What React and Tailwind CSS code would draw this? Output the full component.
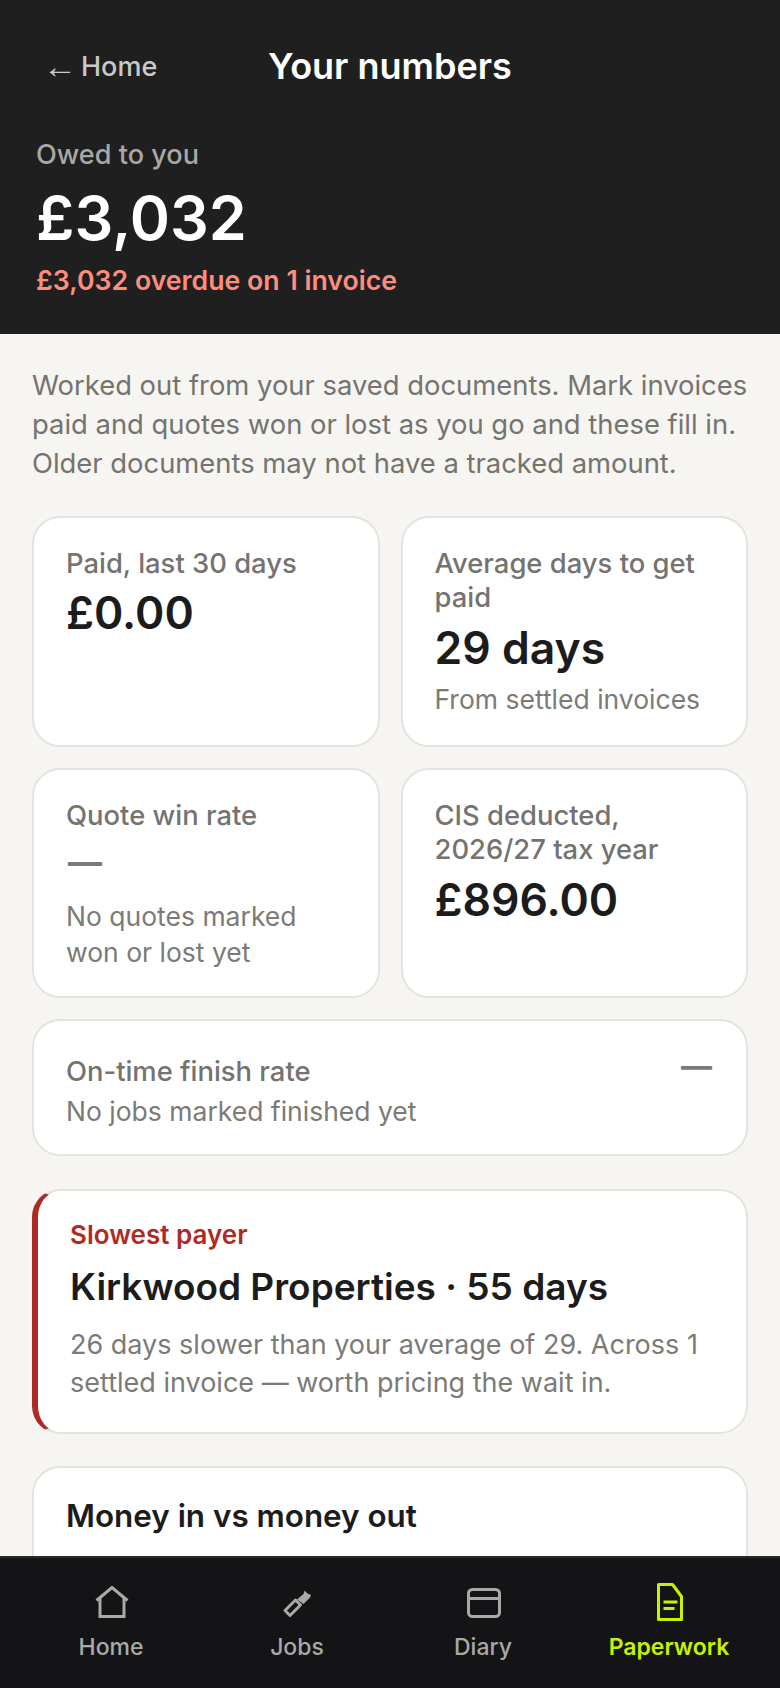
const label = "text-[27.4px] leading-[34px] font-medium text-[#75736f]";
const value = "mt-[7px] text-[44.5px] leading-[54px] font-semibold text-[#1c1c1c]";
const sub = "text-[26.5px] leading-[36px] text-[#7c7a76]";
const card = "bg-white border-2 border-[#e4e3df] rounded-[28px]";

function Stat({ children, className }) {
  return <div className={`${card} px-[32px] pt-[28px] pb-[24px] ${className || ""}`}>{children}</div>;
}

function HomeIcon() {
  return (
    <svg className="mb-[3px]" width="34" height="32" viewBox="0 0 34 32" fill="none" stroke="#a9a9a7" strokeWidth="3">
      <path d="M1.500 14.500 17 1.500l15.500 13" />
      <path d="M5 12v18.500h24V12" />
    </svg>
  );
}

function JobsIcon() {
  return (
    <svg className="mb-[2px]" width="34" height="32" viewBox="0 0 34 32" fill="none">
      <path d="M4 23.500 14.500 13l5 5L9 28.500z" stroke="#a9a9a7" strokeWidth="3" strokeLinejoin="round" />
      <path d="M16 12.500 22.500 7l1-3.500 3 3 3.500 1.500-1 2.500-6.500 6.500z" fill="#a9a9a7" />
    </svg>
  );
}

function DiaryIcon() {
  return (
    <svg className="mb-[3px]" width="34" height="30" viewBox="0 0 34 30" fill="none" stroke="#a9a9a7" strokeWidth="3">
      <rect x="1.500" y="1.500" width="31" height="27" rx="4" />
      <path d="M1.500 10.500h31" />
    </svg>
  );
}

function PaperworkIcon() {
  return (
    <svg width="26" height="38" viewBox="0 0 26 38" fill="none" stroke="#c8f000" strokeWidth="3">
      <path d="M1.500 1.500h14l9 12v23h-23z" strokeLinejoin="round" />
      <path d="M6.500 19h14M6.500 25.500h11" />
    </svg>
  );
}

function NavItem({ icon, text, active }) {
  return (
    <div className="flex flex-col items-center">
      <div className="h-[38px] ml-[2px] flex items-end">{icon}</div>
      <span className={`mt-[10px] text-[23px] leading-[32px] ${active ? "text-[#c8f000] font-semibold" : "text-[#a9a9a7] font-medium"}`}>
        {text}
      </span>
    </div>
  );
}

export default function App() {
  return (
    <div className="h-screen flex flex-col bg-[#f6f5f2] font-['Inter',sans-serif] overflow-hidden">
      <div className="flex-1 overflow-hidden">
        <header className="bg-[#1f1f1f] h-[334px] px-[36px] pt-[46px]">
          <div className="flex items-center h-[42px]">
            <span className="ml-[7px] w-[225px] flex items-center gap-[4px] text-[27px] font-medium text-[#c9c9c5]">
              <span className="mb-[3px] font-['Liberation_Sans',sans-serif] font-normal text-[34px] leading-none">←</span>
              Home
            </span>
            <h1 className="mb-[3px] text-[36px] font-semibold text-white">Your numbers</h1>
          </div>
          <p className="mt-[50px] text-[27.1px] leading-[34px] font-medium text-[#a8a8a5]">Owed to you</p>
          <p className="mt-[10px] text-[61px] leading-[72px] font-semibold text-white">£3,032</p>
          <p className="mt-[9px] text-[26.7px] leading-[34px] font-semibold text-[#ff8d7e]">£3,032 overdue on 1 invoice</p>
        </header>

        <main className="px-[32px] pt-[32px]">
          <p className="text-[27.4px] leading-[39px] text-[#75736f]">
            Worked out from your saved documents. Mark invoices paid and quotes won or lost as you go and these fill in. Older documents may not have a tracked amount.
          </p>

          <div className="mt-[33px] grid grid-cols-2 gap-[21px]">
            <Stat className="h-[231px]">
              <p className={label}>Paid, last 30 days</p>
              <p className="mt-[6px] text-[44.5px] leading-[54px] font-semibold text-[#1c1c1c]">£0.00</p>
            </Stat>
            <Stat className="h-[231px]">
              <p className={label}>Average days to get paid</p>
              <p className={value}>29 days</p>
              <p className={`${sub} mt-[6px]`}>From settled invoices</p>
            </Stat>
            <Stat className="h-[230px]">
              <p className={label}>Quote win rate</p>
              <p className="mt-[3px] ml-[2px] text-[34px] leading-[54px] font-bold text-[#7c7a76]">—</p>
              <p className={`${sub} mt-[9px]`}>No quotes marked won or lost yet</p>
            </Stat>
            <Stat className="h-[230px]">
              <p className={label}>CIS deducted, 2026/27 tax year</p>
              <p className={value}>£896.00</p>
            </Stat>
          </div>

          <div className={`${card} mt-[21px] h-[137px] px-[32px] pt-[33px] flex justify-between`}>
            <div>
              <p className={label}>On-time finish rate</p>
              <p className={`${sub} mt-[5px]`}>No jobs marked finished yet</p>
            </div>
            <span className="mr-[2px] text-[31px] leading-[24px] font-bold text-[#7c7a76]">—</span>
          </div>

          <div className={`${card} mt-[33px] h-[245px] border-l-[6px] !border-l-[#b02a25] pl-[32px] pr-[32px] pt-[27px]`}>
            <p className="text-[26px] leading-[34px] font-semibold text-[#b02a25]">Slowest payer</p>
            <p className="mt-[12px] text-[37px] leading-[46px] font-semibold text-[#1c1c1c]">Kirkwood Properties · 55 days</p>
            <p className="mt-[16px] text-[27px] leading-[38px] text-[#7c7a76]">
              26 days slower than your average of 29. Across 1 settled invoice — worth pricing the wait in.
            </p>
          </div>

          <div className={`${card} mt-[32px] h-[200px] px-[32px] pt-[28px]`}>
            <h2 className="text-[31.4px] leading-[40px] font-semibold text-[#1c1c1c]">Money in vs money out</h2>
          </div>
        </main>
      </div>

      <nav className="h-[132px] shrink-0 bg-[#141416] border-t-2 border-[#2a2a2a] px-[18px] pt-[25px] grid grid-cols-4">
        <NavItem icon={<HomeIcon />} text="Home" />
        <NavItem icon={<JobsIcon />} text="Jobs" />
        <NavItem icon={<DiaryIcon />} text="Diary" />
        <NavItem icon={<PaperworkIcon />} text="Paperwork" active />
      </nav>
    </div>
  );
}
